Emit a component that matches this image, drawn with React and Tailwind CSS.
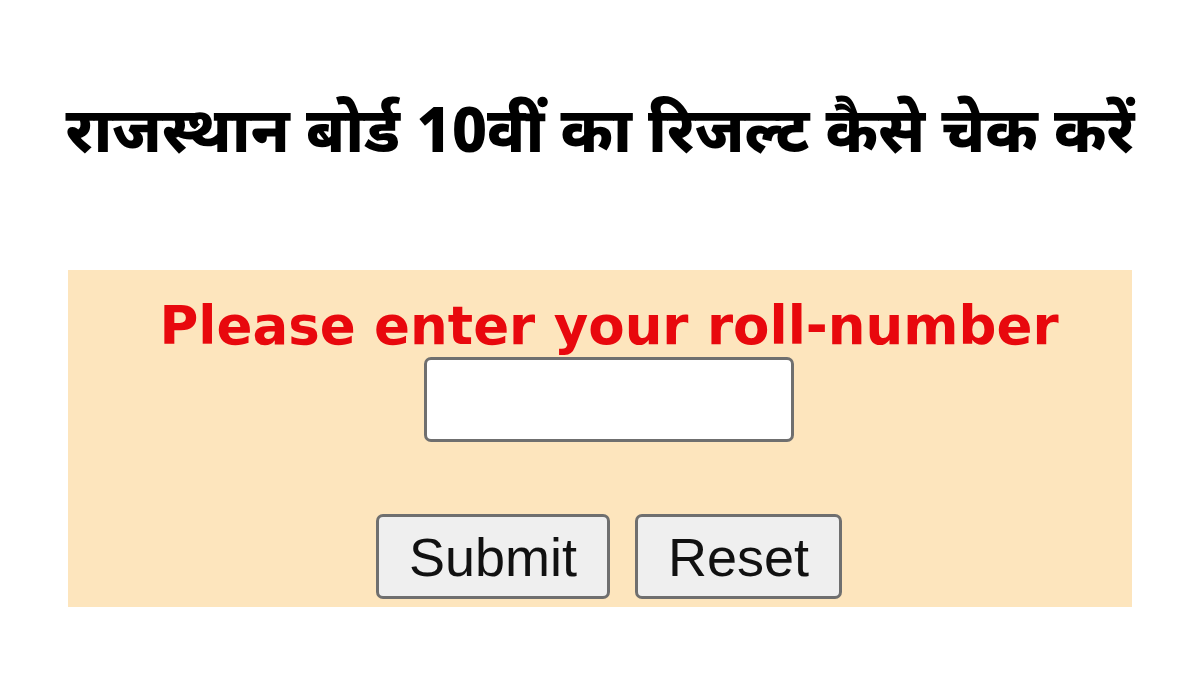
export default function App() {
  return (
    <div className="w-[1200px] h-[675px] bg-white flex flex-col items-center overflow-hidden">
      <h1 className="mt-[89px] h-[96px] shrink-0 text-[62px] leading-[96px] font-extrabold text-black whitespace-nowrap font-['Noto_Sans_Devanagari','Noto_Sans','Lohit_Devanagari','FreeSans',sans-serif]">
        राजस्थान बोर्ड 10वीं का रिजल्ट कैसे चेक करें
      </h1>

      <div className="mt-[85px] w-[1064px] h-[337px] shrink-0 bg-[#fde5bd] flex flex-col items-center pl-[18px]">
        <div className="mt-[27px] shrink-0 text-[53px] leading-[58px] font-bold text-[#e8080d] whitespace-nowrap font-['DejaVu_Sans',sans-serif]">
          Please enter your roll-number
        </div>
        <input
          type="text"
          className="mt-[2px] shrink-0 w-[370px] h-[85px] bg-white border-[3px] border-[#6f6f6f] rounded-[7px]"
        />
        <div className="mt-[72px] shrink-0 flex gap-[25px] font-['Liberation_Sans',sans-serif]">
          <button className="w-[234px] h-[85px] bg-[#efefef] border-[3px] border-[#6f6f6f] rounded-[7px] text-[54px] text-[#111] leading-none">
            Submit
          </button>
          <button className="w-[207px] h-[85px] bg-[#efefef] border-[3px] border-[#6f6f6f] rounded-[7px] text-[54px] text-[#111] leading-none">
            Reset
          </button>
        </div>
      </div>
    </div>
  );
}
